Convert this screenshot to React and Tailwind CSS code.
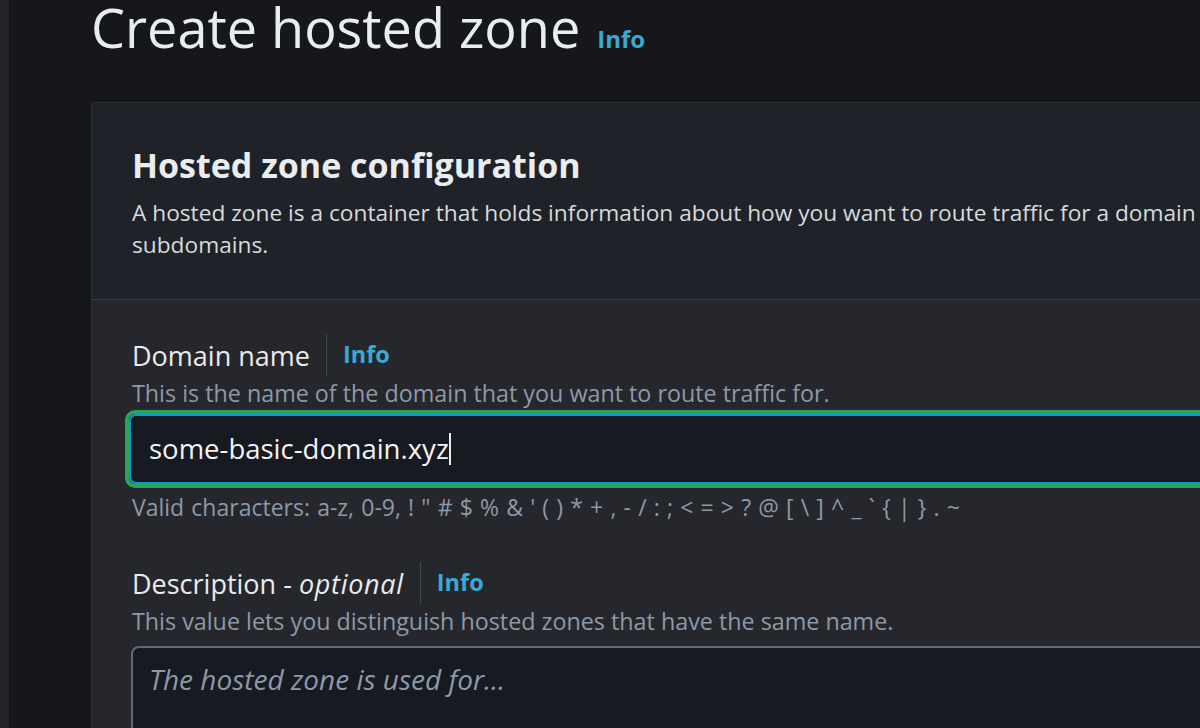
import React from "react";

const font = { fontFamily: '"Open Sans", "Noto Sans", sans-serif' };

const FieldLabel = ({ children }) => (
  <div className="flex items-center h-[44px]">
    <span className="text-[27px] text-[#e9ebed] leading-none whitespace-nowrap">{children}</span>
    <span className="mx-4 h-[42px] w-px bg-[#414750]" />
    <span className="text-[23.5px] font-bold text-[#39a9d5] leading-none">Info</span>
  </div>
);

const App = () => {
  return (
    <div className="flex w-[1200px] h-[728px] overflow-hidden bg-[#16171b]" style={font}>
      <div className="w-[10px] shrink-0 bg-[#232529] border-r border-[#0f1013]" />
      <div className="flex-1 pl-[81px] min-w-0">
        <div className="flex items-end gap-[17px] h-[60px] -mt-[6px]">
          <h1 className="text-[54px] leading-none text-[#eaeded] whitespace-nowrap">Create hosted zone</h1>
          <span className="text-[24px] font-bold text-[#39a9d5] leading-none mb-[3px]">Info</span>
        </div>

        <div className="mt-[48px] bg-[#1f2229] border-t border-l border-[#2a2e35] rounded-tl-[4px] w-[1200px]">
          <div className="px-[40px] pt-[42px] pb-[38px] border-b border-[#3a3f46]">
            <h2 className="text-[34px] font-bold text-[#eaeded] leading-[40px]">Hosted zone configuration</h2>
            <p className="mt-[12px] text-[22.7px] leading-[32px] text-[#d5dbdb] w-[1180px]">
              A hosted zone is a container that holds information about how you want to route traffic for a domain and
              its
              <br />
              subdomains.
            </p>
          </div>

          <div className="bg-[#25272c] px-[40px] pt-[33px] pb-[40px]">
            <FieldLabel>Domain name</FieldLabel>
            <p className="text-[23.3px] leading-[30px] text-[#8d99a8] mt-[1px] whitespace-nowrap">
              This is the name of the domain that you want to route traffic for.
            </p>
            <div className="-ml-[7px] mt-[2px] rounded-[10px] border-[4px] border-[#2ba35a] w-[1100px]">
              <div className="h-[70px] rounded-[7px] border-[2px] border-[#0a9ad1] bg-[#171a21] flex items-center pl-[18px]">
                <span className="text-[27.5px] text-[#f2f3f3]">some-basic-domain.xyz</span>
                <span className="w-[2px] h-[32px] bg-[#e9ebed]" />
              </div>
            </div>
            <p className="text-[23px] leading-[30px] text-[#8d99a8] mt-[4px] whitespace-nowrap [word-spacing:1.2px]">
              Valid characters: a-z, 0-9, ! " # $ % &amp; ' ( ) * + , - / : ; &lt; = &gt; ? @ [ \ ] ^ _ ` {"{"} | {"}"} . ~
            </p>

            <div className="mt-[39px]">
              <FieldLabel>
                Description - <i className="tracking-[0.7px]">optional</i>
              </FieldLabel>
              <p className="text-[23.3px] leading-[30px] text-[#8d99a8] mt-[1px] whitespace-nowrap">
                This value lets you distinguish hosted zones that have the same name.
              </p>
              <div className="mt-[10px] -ml-[1px] h-[120px] w-[1100px] rounded-[8px] border-[2px] border-[#5f6b7a] bg-[#171a21] pl-[16px] pt-[10px]">
                <span className="text-[28px] italic text-[#8d99a8]">The hosted zone is used for...</span>
              </div>
            </div>
          </div>
        </div>
      </div>
    </div>
  );
};

export default App;
